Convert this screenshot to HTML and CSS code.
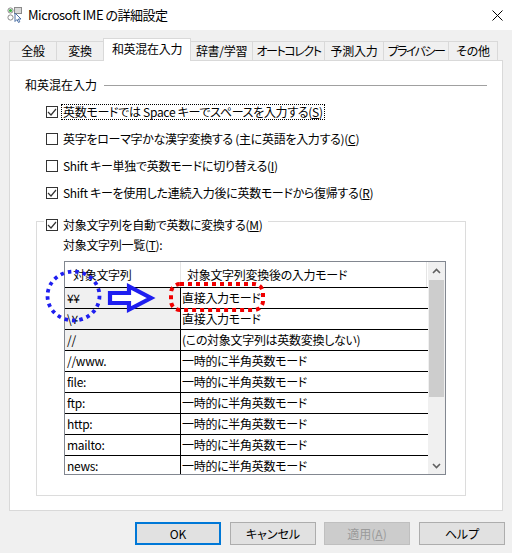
FILE: index.html
```html
<!DOCTYPE html>
<html lang="ja">
<head>
<meta charset="utf-8">
<title>Microsoft IME の詳細設定</title>
<link rel="stylesheet" href="styles.css">
</head>
<body>
<div class="titlebar">
  <svg class="app-icon" width="16" height="16" viewBox="0 0 16 16">
    <circle cx="3.5" cy="3.5" r="2.6" fill="#fff" stroke="#8a8a8a" stroke-width="1"/>
    <circle cx="3.5" cy="3.5" r="1.6" fill="#3cb043"/>
    <circle cx="3.5" cy="10.5" r="2.6" fill="#fff" stroke="#8a8a8a" stroke-width="1"/>
    <rect x="7.5" y="0.5" width="7" height="6" fill="#d8d8d8" stroke="#8a8a8a" stroke-width="1"/>
    <path d="M8 6 L8 14.5 L10 12.5 L11.5 15.5 L12.8 14.8 L11.4 12 L14 12 Z" fill="#fff" stroke="#4a6fa5" stroke-width="1" stroke-linejoin="round"/>
  </svg>
  <span class="title">Microsoft IME の詳細設定</span>
  <div class="close">
    <svg width="11" height="11" viewBox="0 0 11 11"><path d="M0.5 0.5 L10.5 10.5 M10.5 0.5 L0.5 10.5" stroke="#000" stroke-width="1"/></svg>
  </div>
</div>

<div class="tabs">
  <div class="tab w1">全般</div>
  <div class="tab w2">変換</div>
  <div class="tab w3 active">和英混在入力</div>
  <div class="tab w4">辞書/学習</div>
  <div class="tab w5">オートコレクト</div>
  <div class="tab w6">予測入力</div>
  <div class="tab w7">プライバシー</div>
  <div class="tab w8">その他</div>
</div>

<div class="panel">
  <div class="section-head"><span>和英混在入力</span><div class="rule"></div></div>

  <div class="checks">
    <div class="check-row">
      <span class="box checked"><svg width="10" height="10" viewBox="0 0 10 10"><path d="M1 5 L4 8 L9 2" fill="none" stroke="#333" stroke-width="1.2"/></svg></span>
      <span class="label focus">英数モードでは Space キーでスペースを入力する(<u>S</u>)</span>
    </div>
    <div class="check-row">
      <span class="box"></span>
      <span class="label">英字をローマ字かな漢字変換する (主に英語を入力する)(<u>C</u>)</span>
    </div>
    <div class="check-row">
      <span class="box"></span>
      <span class="label">Shift キー単独で英数モードに切り替える(<u>I</u>)</span>
    </div>
    <div class="check-row">
      <span class="box checked"><svg width="10" height="10" viewBox="0 0 10 10"><path d="M1 5 L4 8 L9 2" fill="none" stroke="#333" stroke-width="1.2"/></svg></span>
      <span class="label">Shift キーを使用した連続入力後に英数モードから復帰する(<u>R</u>)</span>
    </div>
  </div>

  <div class="group">
    <div class="legend">
      <span class="box checked"><svg width="10" height="10" viewBox="0 0 10 10"><path d="M1 5 L4 8 L9 2" fill="none" stroke="#333" stroke-width="1.2"/></svg></span>
      <span class="label">対象文字列を自動で英数に変換する(<u>M</u>)</span>
    </div>
    <div class="list-label">対象文字列一覧(<u>T</u>):</div>
    <div class="listview">
      <div class="list">
        <div class="lv-head">
          <div class="hc c1">対象文字列</div>
          <div class="hc c2">対象文字列変換後の入力モード</div>
        </div>
        <div class="lv-row"><div class="cell c1 shaded">¥¥</div><div class="cell c2">直接入力モード</div></div>
        <div class="lv-row"><div class="cell c1 shaded">\¥</div><div class="cell c2">直接入力モード</div></div>
        <div class="lv-row"><div class="cell c1 shaded">//</div><div class="cell c2">(この対象文字列は英数変換しない)</div></div>
        <div class="lv-row"><div class="cell c1">//www.</div><div class="cell c2">一時的に半角英数モード</div></div>
        <div class="lv-row"><div class="cell c1">file:</div><div class="cell c2">一時的に半角英数モード</div></div>
        <div class="lv-row"><div class="cell c1">ftp:</div><div class="cell c2">一時的に半角英数モード</div></div>
        <div class="lv-row"><div class="cell c1">http:</div><div class="cell c2">一時的に半角英数モード</div></div>
        <div class="lv-row"><div class="cell c1">mailto:</div><div class="cell c2">一時的に半角英数モード</div></div>
        <div class="lv-row"><div class="cell c1">news:</div><div class="cell c2">一時的に半角英数モード</div></div>
      </div>
      <div class="scrollbar">
        <div class="sb-btn"><svg width="9" height="6" viewBox="0 0 9 6"><path d="M1 5 L4.5 1.5 L8 5" fill="none" stroke="#606060" stroke-width="1.6"/></svg></div>
        <div class="sb-track"><div class="sb-thumb"></div></div>
        <div class="sb-btn"><svg width="9" height="6" viewBox="0 0 9 6"><path d="M1 1 L4.5 4.5 L8 1" fill="none" stroke="#606060" stroke-width="1.6"/></svg></div>
      </div>
    </div>
  </div>
</div>

<div class="buttons">
  <div class="btn ok">OK</div>
  <div class="btn cancel">キャンセル</div>
  <div class="btn apply">適用(<u>A</u>)</div>
  <div class="btn help">ヘルプ</div>
</div>

<svg class="annot" width="512" height="553" viewBox="0 0 512 553">
  <ellipse cx="73.5" cy="296" rx="26" ry="24.5" fill="none" stroke="#1e1ef0" stroke-width="3.8" stroke-dasharray="3.5 4"/>
  <path d="M110 293 L129 293 L129 286.5 L151 298 L129 309.5 L129 303 L110 303 Z" fill="#fff" stroke="#1e1ef0" stroke-width="4.2" stroke-linejoin="miter"/>
  <rect x="171" y="284" width="92" height="26" rx="9" ry="9" fill="none" stroke="#f00000" stroke-width="4" stroke-dasharray="4 4"/>
</svg>
</body>
</html>
```

FILE: styles.css
```css
* { box-sizing: border-box; }

html, body {
  margin: 0;
  padding: 0;
}

body {
  position: relative;
  width: 512px;
  height: 553px;
  overflow: hidden;
  background: #f0f0f0;
  color: #000;
  font-family: "Noto Sans CJK JP", "Noto Sans", sans-serif;
  font-size: 12px;
  line-height: 16px;
  font-feature-settings: "palt";
}

u { text-decoration: underline; text-underline-offset: 1px; }

/* title bar */
.titlebar {
  height: 30px;
  background: #fff;
  display: flex;
  align-items: center;
  padding-left: 7px;
}
.app-icon { flex: none; margin-right: 5px; margin-top: -1px; }
.title { flex: 1; font-size: 13px; line-height: 16px; letter-spacing: -0.5px; }
.close {
  width: 30px;
  height: 30px;
  display: flex;
  align-items: center;
  justify-content: center;
}

/* tabs */
.tabs {
  height: 30px;
  display: flex;
  align-items: flex-end;
  padding: 0 0 0 9px;
}
.tab {
  height: 19px;
  margin-right: -1px;
  border: 1px solid #d9d9d9;
  border-bottom: none;
  background: #f0f0f0;
  display: flex;
  align-items: center;
  justify-content: center;
  white-space: nowrap;
  letter-spacing: -0.3px;
}
.tab.active {
  position: relative;
  z-index: 1;
  height: 23px;
  margin-bottom: -1px;
  padding-bottom: 3px;
  background: #fff;
}
.w1 { width: 48px; }
.w2 { width: 48px; }
.w3 { width: 88px; }
.w4 { width: 63px; }
.w5 { width: 73px; letter-spacing: -1.4px; }
.w6 { width: 60px; }
.w7 { width: 66px; letter-spacing: -1.6px; }
.w8 { width: 50px; }

/* panel */
.panel {
  margin-left: 9px;
  width: 494px;
  height: 451px;
  background: #fff;
  border: 1px solid #d9d9d9;
}

.section-head {
  display: flex;
  align-items: center;
  margin: 16px 15px 0 15px;
  height: 16px;
}
.section-head .rule {
  flex: 1;
  height: 1px;
  background: #a0a0a0;
  margin-left: 7px;
}

.checks {
  margin-top: 5px;
  padding-left: 36px;
}
.check-row {
  height: 27px;
  display: flex;
  align-items: center;
}

.box {
  flex: none;
  width: 12px;
  height: 12px;
  border: 1px solid #333;
  background: #fff;
  display: flex;
  align-items: center;
  justify-content: center;
}
.label {
  margin-left: 3px;
  padding: 0 1px;
  border: 1px solid transparent;
  white-space: nowrap;
  line-height: 14px;
  letter-spacing: -0.3px;
}
.label.focus { border: 1px dotted #000; }

/* group box */
.group {
  margin: 15px 0 0 26px;
  width: 430px;
  height: 275px;
  border: 1px solid #dcdcdc;
}
.legend {
  display: flex;
  width: max-content;
  align-items: center;
  height: 16px;
  margin: -5px 0 0 7px;
  padding: 0 3px 0 2px;
  background: #fff;
}
.list-label {
  margin: 4px 0 0 26px;
  height: 16px;
  letter-spacing: -0.3px;
}

.listview {
  margin: 8px 0 0 27px;
  width: 382px;
  height: 214px;
  border: 1px solid #828790;
  display: flex;
  overflow: hidden;
}
.list {
  width: 363px;
  flex: none;
  background: #fff;
}
.lv-head {
  height: 26px;
  display: flex;
  border-bottom: 1px solid #000;
}
.hc {
  height: 25px;
  display: flex;
  align-items: center;
  border-right: 1px solid #e5e5e5;
  white-space: nowrap;
  letter-spacing: -0.3px;
}
.hc.c1 { width: 116px; padding-left: 8px; }
.hc.c2 { width: 246px; padding-left: 6px; }

.lv-row {
  height: 21px;
  display: flex;
  border-bottom: 1px solid #000;
}
.cell {
  height: 20px;
  display: flex;
  align-items: center;
  white-space: nowrap;
  letter-spacing: -0.3px;
}
.cell.c1 {
  width: 116px;
  padding-left: 2px;
  border-right: 1px solid #000;
}
.cell.c1.shaded { background: #f0f0f0; }
.cell.c2 { flex: 1; padding-left: 1px; }

.scrollbar {
  width: 17px;
  flex: none;
  background: #f0f0f0;
  display: flex;
  flex-direction: column;
}
.sb-btn {
  height: 17px;
  flex: none;
  display: flex;
  align-items: center;
  justify-content: center;
}
.sb-track {
  flex: 1;
  padding: 1px 1px 0 1px;
}
.sb-thumb {
  height: 117px;
  background: #cdcdcd;
}

/* buttons */
.buttons {
  display: flex;
  justify-content: flex-end;
  margin-top: 11px;
  padding-right: 7px;
}
.btn {
  width: 86px;
  height: 23px;
  border: 1px solid #adadad;
  background: #e1e1e1;
  display: flex;
  align-items: center;
  justify-content: center;
  line-height: 14px;
}
.btn.ok { border: 2px solid #0078d7; }
.btn.cancel { margin-left: 9px; }
.btn.apply {
  margin-left: 8px;
  background: #cccccc;
  border-color: #bfbfbf;
  color: #9a9a9a;
}
.btn.help { margin-left: 9px; }

/* annotation overlay drawn on top of the screenshot */
.annot {
  position: absolute;
  left: 0;
  top: 0;
  pointer-events: none;
}
```
